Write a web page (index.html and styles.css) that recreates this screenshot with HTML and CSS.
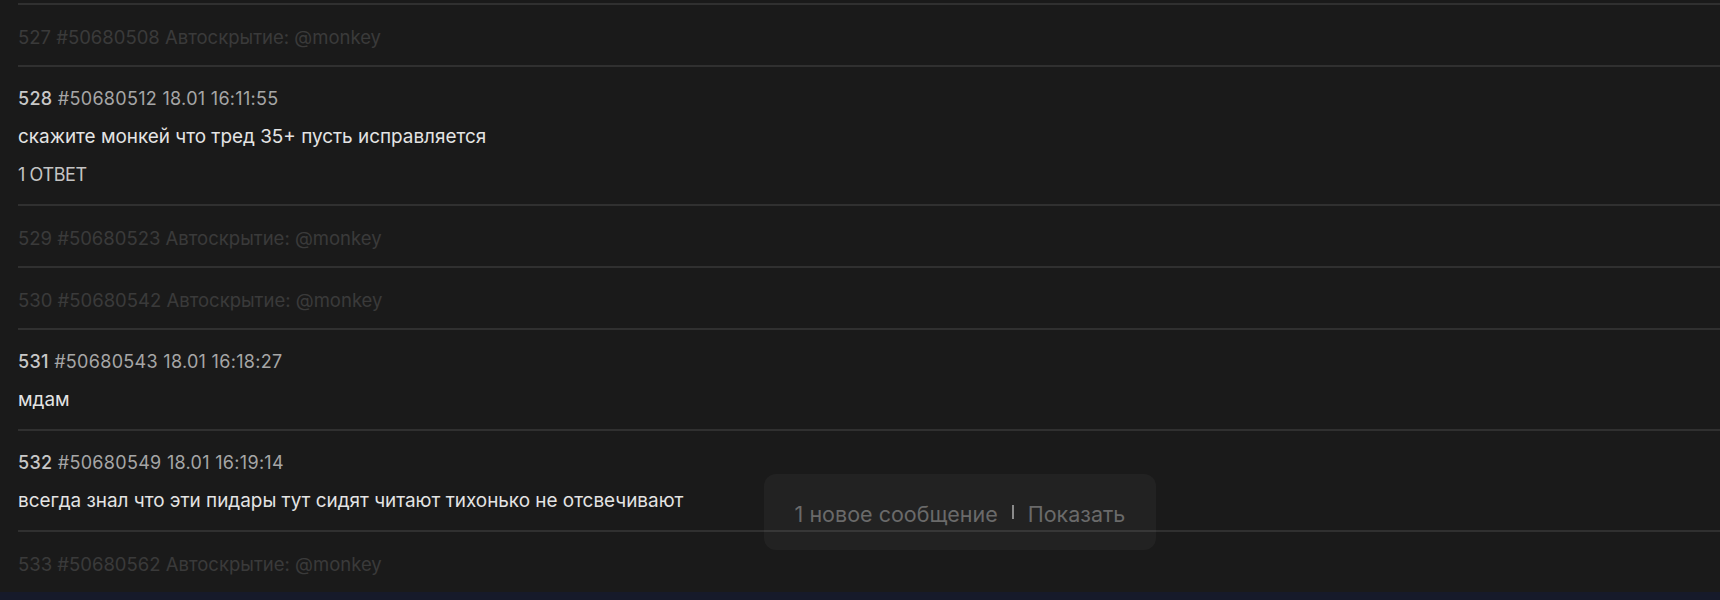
FILE: index.html
```html
<!DOCTYPE html>
<html lang="ru">
<head>
<meta charset="utf-8">
<title>Тред</title>
<link rel="stylesheet" href="styles.css">
</head>
<body>
<div class="page">
  <main class="thread">
    <article class="post post--hidden">
      <div class="post__line">527 #50680508 Автоскрытие: @monkey</div>
    </article>
    <article class="post">
      <div class="post__head"><span class="post__num">528</span> #50680512 18.01 16:11:55</div>
      <div class="post__text">скажите монкей что тред 35+ пусть исправляется</div>
      <div class="post__replies">1 ОТВЕТ</div>
    </article>
    <article class="post post--hidden">
      <div class="post__line">529 #50680523 Автоскрытие: @monkey</div>
    </article>
    <article class="post post--hidden">
      <div class="post__line">530 #50680542 Автоскрытие: @monkey</div>
    </article>
    <article class="post">
      <div class="post__head"><span class="post__num">531</span> #50680543 18.01 16:18:27</div>
      <div class="post__text">мдам</div>
    </article>
    <article class="post">
      <div class="post__head"><span class="post__num">532</span> #50680549 18.01 16:19:14</div>
      <div class="post__text">всегда знал что эти пидары тут сидят читают тихонько не отсвечивают</div>
    </article>
    <article class="post post--hidden">
      <div class="post__line">533 #50680562 Автоскрытие: @monkey</div>
    </article>
  </main>
  <div class="bottom-bar"></div>
  <div class="toast">
    <span class="toast__msg">1 новое сообщение</span>
    <span class="toast__sep"></span>
    <span class="toast__action">Показать</span>
  </div>
</div>
</body>
</html>
```

FILE: styles.css
```css
html, body {
  margin: 0;
  padding: 0;
  height: 100%;
  overflow: hidden;
}

body {
  background: #1a1a1a;
  font-family: "Inter", "Liberation Sans", sans-serif;
  -webkit-font-smoothing: antialiased;
}

.page {
  position: relative;
  height: 600px;
  display: flex;
  flex-direction: column;
}

.thread {
  padding: 3px 0 0 18px;
  display: flex;
  flex-direction: column;
}

.post {
  border-top: 2px solid #303030;
  padding: 13px 0 10px 0;
  display: flex;
  flex-direction: column;
}

.post--hidden {
  padding-bottom: 9px;
}

.post__line,
.post__head,
.post__text,
.post__replies {
  height: 38px;
  line-height: 38px;
  white-space: nowrap;
}

.post__line {
  font-size: 18.5px;
  color: #3a3a3a;
}

.post__head {
  font-size: 18px;
  letter-spacing: 0.3px;
  color: #a6a6a6;
}

.post__num {
  color: #c8c8c8;
  font-weight: 500;
}

.post__text {
  font-size: 18.9px;
  color: #e4e4e4;
}

.post__replies {
  font-size: 18px;
  color: #c4c4c4;
  letter-spacing: -0.4px;
}

.bottom-bar {
  flex: 1;
  background: #161a2a;
}

.toast {
  position: absolute;
  left: 764px;
  top: 474px;
  width: 392px;
  height: 76px;
  box-sizing: border-box;
  border-radius: 12px;
  background: rgba(255, 255, 255, 0.035);
  display: flex;
  align-items: center;
  justify-content: center;
  gap: 14px;
  padding-top: 3px;
  font-size: 21.5px;
  color: #6a6a6a;
}

.toast__sep {
  width: 2px;
  height: 14px;
  background: #8a8a8a;
  margin-top: -3px;
}
```
